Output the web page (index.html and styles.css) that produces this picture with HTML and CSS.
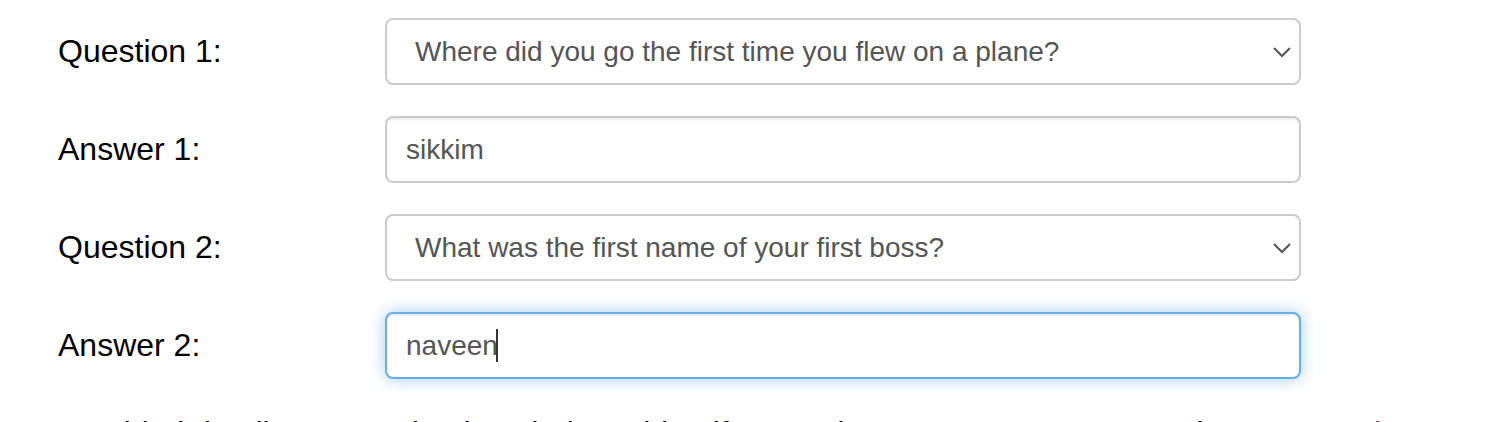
FILE: index.html
```html
<!DOCTYPE html>
<html lang="en">
<head>
<meta charset="utf-8">
<title>Security questions</title>
<link rel="stylesheet" href="styles.css">
</head>
<body>
<form class="form">
  <div class="row">
    <label class="label">Question 1:</label>
    <div class="field select">
      <span class="value select-value">Where did you go the first time you flew on a plane?</span>
      <svg class="chevron" width="20" height="12" viewBox="0 0 20 12"><path d="M2 2 L10 10 L18 2" fill="none" stroke="#555" stroke-width="2"/></svg>
    </div>
  </div>
  <div class="row">
    <label class="label">Answer 1:</label>
    <div class="field"><span class="value">sikkim</span></div>
  </div>
  <div class="row">
    <label class="label">Question 2:</label>
    <div class="field select">
      <span class="value select-value">What was the first name of your first boss?</span>
      <svg class="chevron" width="20" height="12" viewBox="0 0 20 12"><path d="M2 2 L10 10 L18 2" fill="none" stroke="#555" stroke-width="2"/></svg>
    </div>
  </div>
  <div class="row">
    <label class="label">Answer 2:</label>
    <div class="field focus"><span class="value">naveen</span><span class="caret"></span></div>
  </div>
  <p class="note">Provided details are used only to help us identify you when you reset a password. See our <a class="link" href="#">Privacy Policy</a></p>
</form>
</body>
</html>
```
FILE: styles.css
```css
html, body {
  margin: 0;
  padding: 0;
  background: #fff;
  overflow: hidden;
}
body {
  font-family: "Liberation Sans", Arial, Helvetica, sans-serif;
  color: #111;
}
.form {
  padding: 18px 0 0 58px;
  display: flex;
  flex-direction: column;
  gap: 31px;
}
.row {
  display: grid;
  grid-template-columns: 327px 916px;
  align-items: center;
}
.label {
  font-size: 32px;
  color: #000;
}
.field {
  position: relative;
  box-sizing: border-box;
  height: 67px;
  border: 2px solid #ccc;
  border-radius: 8px;
  background: #fff;
  box-shadow: inset 0 2px 2px rgba(0,0,0,.075);
  display: flex;
  align-items: center;
  padding-left: 19px;
  font-size: 28px;
  color: #555;
}
.select {
  padding-left: 28px;
  box-shadow: none;
}
.chevron {
  position: absolute;
  right: 7px;
  top: 50%;
  margin-top: -6px;
}
.focus {
  border-color: #66afe9;
  box-shadow: inset 0 2px 2px rgba(0,0,0,.075), 0 0 16px rgba(102,175,233,.6);
}
.caret {
  display: inline-block;
  width: 2px;
  height: 33px;
  background: #333;
  margin-left: -2px;
}
.note {
  margin: 0;
  font-size: 32px;
  line-height: 46px;
  color: #000;
  white-space: nowrap;
}
.link {
  color: #c9302c;
  text-decoration: none;
}
```
